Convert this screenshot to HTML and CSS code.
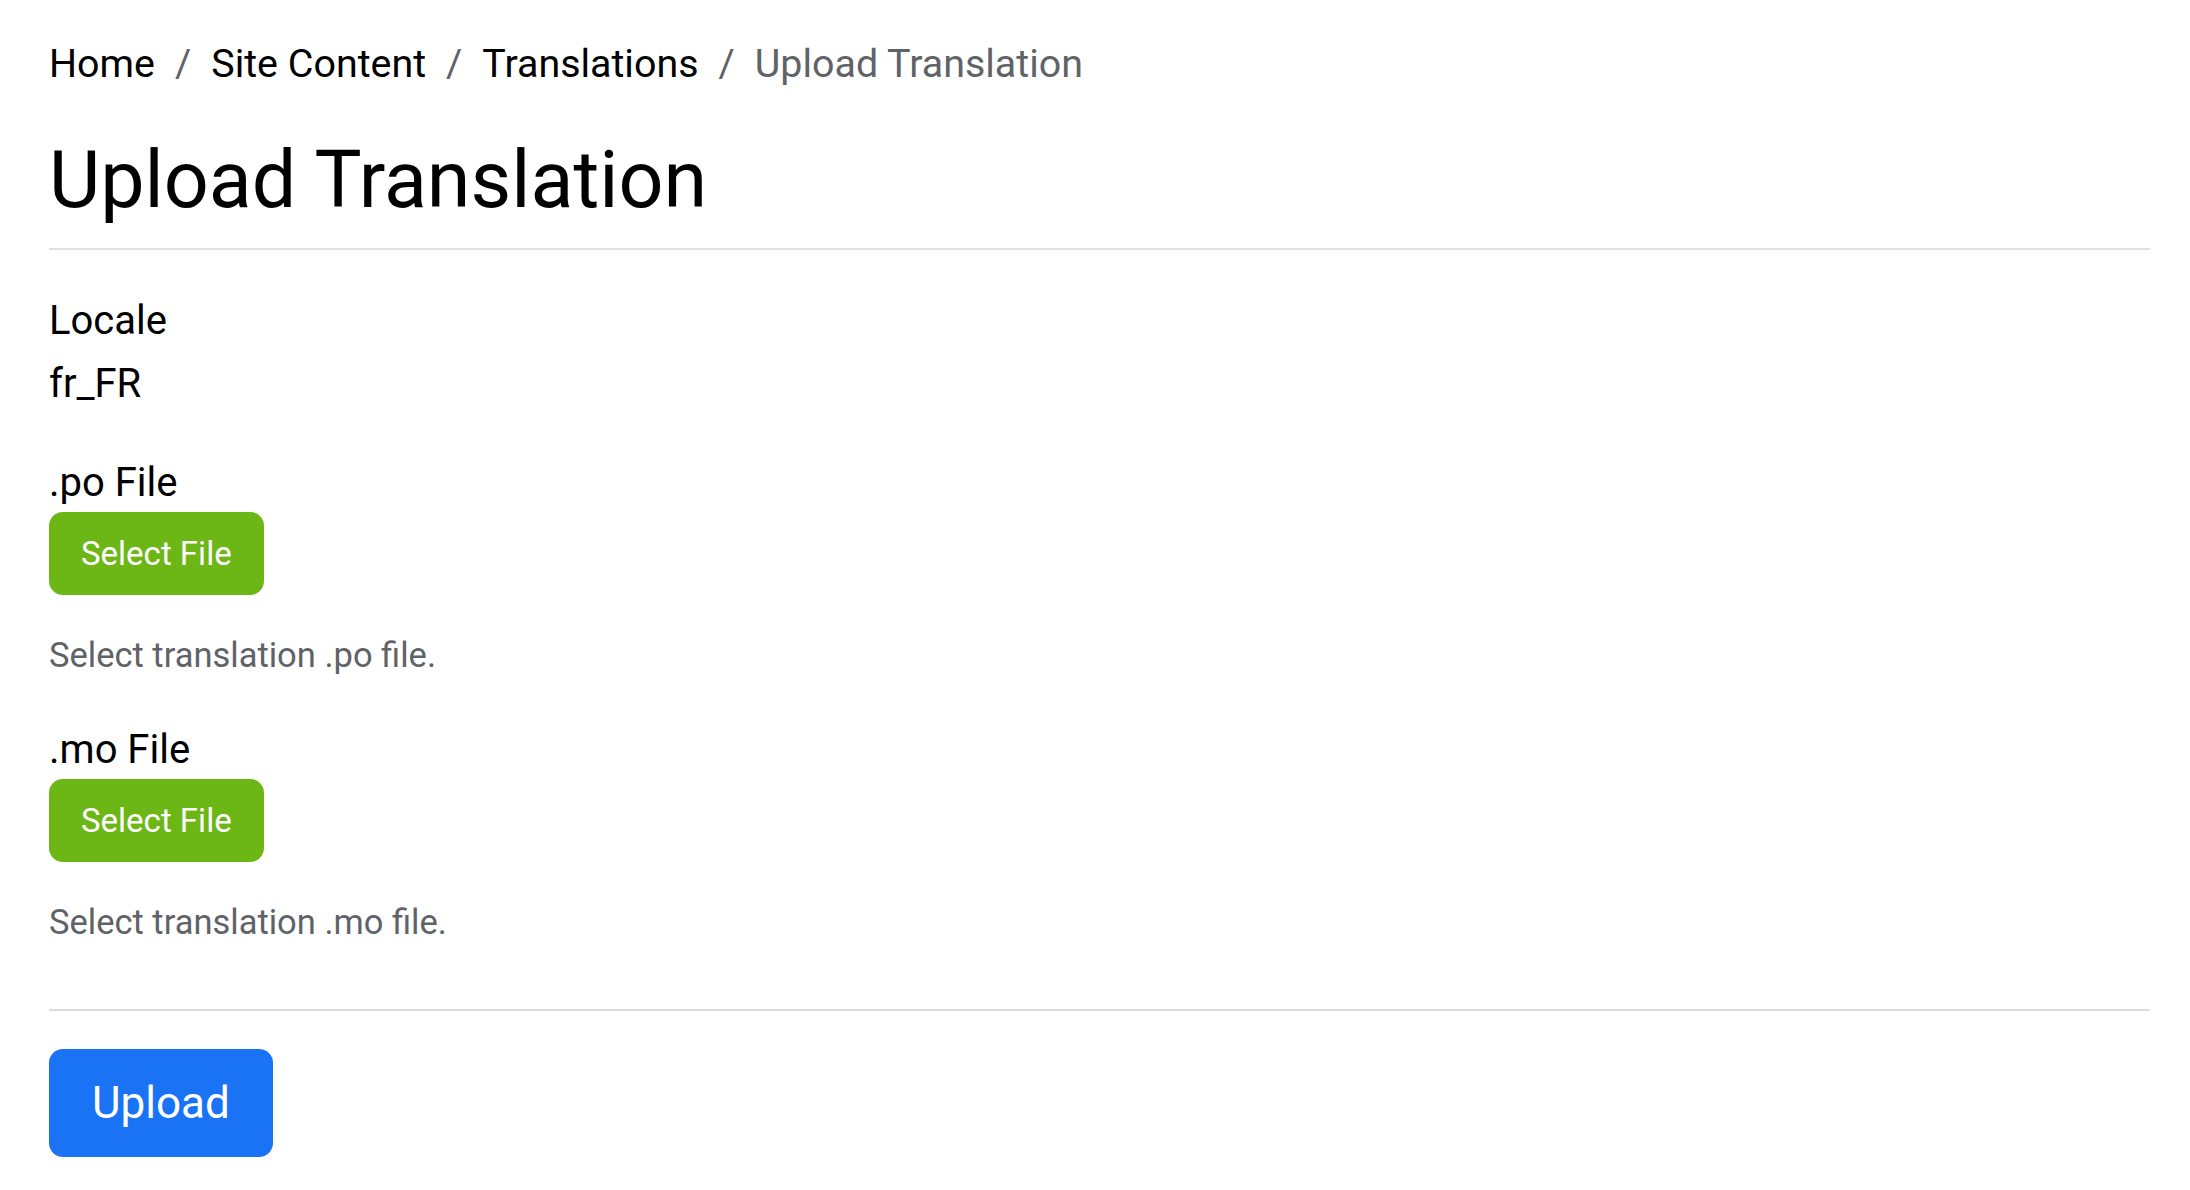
FILE: index.html
```html
<!DOCTYPE html>
<html lang="en">
<head>
  <meta charset="UTF-8" />
  <meta name="viewport" content="width=device-width, initial-scale=1.0"/>
  <title>Upload Translation</title>
  <link rel="stylesheet" href="styles.css">
</head>
<body>
  <div class="page">
    <nav class="crumbs">
      <a href="#">Home</a>
      <span class="sep">/</span>
      <a href="#">Site Content</a>
      <span class="sep">/</span>
      <a href="#">Translations</a>
      <span class="sep">/</span>
      <span class="current">Upload Translation</span>
    </nav>

    <h1>Upload Translation</h1>
    <hr class="rule">

    <form class="upload-form" onsubmit="return false">
      <div class="field">
        <div class="label">Locale</div>
        <div class="value">fr_FR</div>
      </div>

      <div class="field">
        <label class="label" for="po-file">.po File</label>
        <input type="file" id="po-file" class="file-input" accept=".po">
        <button type="button" class="btn btn-file" onclick="pickFile('po-file')">Select File</button>
        <p class="help">Select translation .po file.</p>
      </div>

      <div class="field">
        <label class="label" for="mo-file">.mo File</label>
        <input type="file" id="mo-file" class="file-input" accept=".mo">
        <button type="button" class="btn btn-file" onclick="pickFile('mo-file')">Select File</button>
        <p class="help">Select translation .mo file.</p>
      </div>

      <hr class="rule rule-bottom">

      <button type="submit" class="btn btn-primary">Upload</button>
    </form>
  </div>

  <script>
    // open the hidden file picker behind each green button
    function pickFile(id) {
      document.getElementById(id).click();
    }
  </script>
</body>
</html>
```

FILE: styles.css
```css
:root {
  --text: #000;
  --muted: #5f6368;
  --line: #e0e0e0;
  --green: #6cb716;
  --blue: #1a73f5;
}

body {
  margin: 0;
  font-family: Roboto, "Noto Sans", Arial, sans-serif;
  font-size: 40px;
  line-height: 1.5;
  color: var(--text);
  background: #fff;
}

.page {
  padding: 34px 40px 0 49px;
}

/* breadcrumb */
.crumbs {
  display: flex;
  align-items: baseline;
  font-size: 39.4px;
}

.crumbs a {
  color: var(--text);
  text-decoration: none;
}

.crumbs .sep {
  color: var(--muted);
  padding: 0 20px;
}

.crumbs .current {
  color: var(--muted);
}

h1 {
  font-size: 79px;
  font-weight: 400;
  line-height: 1.2;
  margin: 40px 0 20px;
}

.rule {
  border: none;
  border-top: 2px solid var(--line);
  margin: 0;
}

.rule-bottom {
  border-top-color: #dadce0;
  margin-top: 61px;
}

.upload-form {
  padding-top: 42px;
}

.field {
  margin-bottom: 40px;
}

.field:last-of-type {
  margin-bottom: 0;
}

.label {
  display: block;
  line-height: 58px;
}

.value {
  margin-top: 4px;
  line-height: 60px;
}

.file-input {
  display: none;
}

.btn {
  display: inline-block;
  border: none;
  color: #fff;
  font-family: inherit;
  cursor: pointer;
}

.btn-file {
  background: var(--green);
  font-size: 33px;
  line-height: 53px;
  padding: 15px 32px;
  border-radius: 14px;
}

.btn-primary {
  background: var(--blue);
  font-size: 44px;
  line-height: 64px;
  padding: 22px 43px;
  border-radius: 14px;
  margin-top: 38px;
}

.help {
  margin: 35px 0 0;
  font-size: 34.5px;
  line-height: 51px;
  color: var(--muted);
}
```
